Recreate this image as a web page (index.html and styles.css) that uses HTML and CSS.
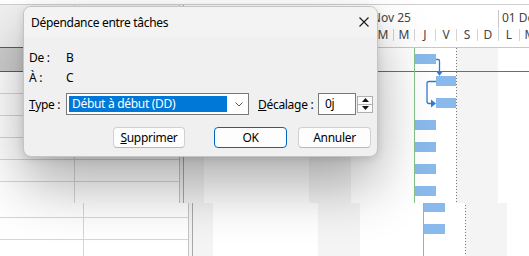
FILE: index.html
```html
<!DOCTYPE html>
<html lang="fr">
<head>
<meta charset="utf-8">
<title>Dépendance entre tâches</title>
<link rel="stylesheet" href="styles.css">
</head>
<body>
<div class="screen">
  <div class="strip strip-top">
    <div class="project">
      <div class="ribbon-edge"></div>
      <div class="view">
        <div class="grid">
          <div class="grid-head"><div class="c1"></div><div class="c2"></div></div>
          <div class="grid-row sel"><div class="c1"></div><div class="c2"></div></div>
          <div class="grid-row"><div class="c1"></div><div class="c2"></div></div>
          <div class="grid-row"><div class="c1"></div><div class="c2"></div></div>
          <div class="grid-row"><div class="c1"></div><div class="c2"></div></div>
          <div class="grid-row"><div class="c1"></div><div class="c2"></div></div>
          <div class="grid-row"><div class="c1"></div><div class="c2"></div></div>
          <div class="grid-row"><div class="c1"></div><div class="c2"></div></div>
          <div class="grid-row"><div class="c1"></div><div class="c2"></div></div>
          <div class="grid-row"><div class="c1"></div><div class="c2"></div></div>
          <div class="grid-row"><div class="c1"></div><div class="c2"></div></div>
        </div>
        <div class="splitter"></div>
        <div class="gantt">
          <div class="timescale">
            <div class="tier-top">
              <div class="week partial"></div>
              <div class="week">17 Nov 25</div>
              <div class="week">24 Nov 25</div>
              <div class="week">01 Déc 25</div>
            </div>
            <div class="tier-bottom">
              <div class="day">D</div><div class="day">L</div><div class="day">M</div><div class="day">M</div><div class="day">J</div><div class="day">V</div><div class="day">S</div>
              <div class="day">D</div><div class="day">L</div><div class="day">M</div><div class="day">M</div><div class="day">J</div><div class="day">V</div><div class="day">S</div>
              <div class="day">D</div><div class="day">L</div><div class="day">M</div>
            </div>
          </div>
          <div class="chart">
            <div class="today"></div>
            <div class="status"></div>
            <div class="g-row sel"><div class="bar" style="margin-left:231px;width:21px"></div></div>
            <div class="g-row"><div class="bar" style="margin-left:252px;width:20px"></div></div>
            <div class="g-row"><div class="bar" style="margin-left:252px;width:20px"></div></div>
            <div class="g-row"><div class="bar" style="margin-left:231px;width:21px"></div></div>
            <div class="g-row"><div class="bar" style="margin-left:231px;width:21px"></div></div>
            <div class="g-row"><div class="bar" style="margin-left:231px;width:21px"></div></div>
            <div class="g-row"><div class="bar" style="margin-left:231px;width:21px"></div></div>
            <div class="g-row"><div class="bar" style="margin-left:231px;width:21px"></div></div>
            <div class="g-row"><div class="bar" style="margin-left:231px;width:21px"></div></div>
            <div class="g-row"></div>
            <svg class="links" width="300" height="80" viewBox="0 0 300 80">
              <path d="M252 11.5 H254 Q255.5 11.5 255.5 13 V24" fill="none" stroke="#2f7bd1" stroke-width="1.3"/>
              <polygon points="252,23 259,23 255.5,28" fill="#2f7bd1"/>
              <path d="M252 33.5 H245 Q243 33.5 243 35.5 V53.5 Q243 55.5 245 55.5 H248" fill="none" stroke="#2f7bd1" stroke-width="1.3"/>
              <polygon points="247,51.5 247,59.5 252,55.5" fill="#2f7bd1"/>
            </svg>
          </div>
        </div>
      </div>
    </div>
  </div>
  <div class="strip strip-bottom">
    <div class="project wide">
      <div class="ribbon-edge"></div>
      <div class="view">
        <div class="grid">
          <div class="grid-head"><div class="c1"></div><div class="c2"></div></div>
          <div class="grid-row sel"><div class="c1"></div><div class="c2"></div></div>
          <div class="grid-row"><div class="c1"></div><div class="c2"></div></div>
          <div class="grid-row"><div class="c1"></div><div class="c2"></div></div>
          <div class="grid-row"><div class="c1"></div><div class="c2"></div></div>
          <div class="grid-row"><div class="c1"></div><div class="c2"></div></div>
          <div class="grid-row"><div class="c1"></div><div class="c2"></div></div>
          <div class="grid-row"><div class="c1"></div><div class="c2"></div></div>
          <div class="grid-row"><div class="c1"></div><div class="c2"></div></div>
          <div class="grid-row"><div class="c1"></div><div class="c2"></div></div>
          <div class="grid-row"><div class="c1"></div><div class="c2"></div></div>
        </div>
        <div class="splitter"></div>
        <div class="gantt">
          <div class="timescale"></div>
          <div class="chart">
            <div class="today"></div>
            <div class="status"></div>
            <div class="g-row sel"></div>
            <div class="g-row"></div>
            <div class="g-row"></div>
            <div class="g-row"></div>
            <div class="g-row"></div>
            <div class="g-row"></div>
            <div class="g-row"></div>
            <div class="g-row"><div class="bar" style="margin-left:231px;width:21px"></div></div>
            <div class="g-row"><div class="bar" style="margin-left:231px;width:21px"></div></div>
            <div class="g-row"></div>
          </div>
        </div>
      </div>
    </div>
  </div>

  <div class="dialog" role="dialog" aria-label="Dépendance entre tâches">
    <div class="dlg-title">
      <span class="dlg-title-text">Dépendance entre tâches</span>
      <svg class="close" width="10" height="10" viewBox="0 0 10 10">
        <path d="M0.5 0.5 L9.5 9.5 M9.5 0.5 L0.5 9.5" stroke="#1a1a1a" stroke-width="1.1" fill="none"/>
      </svg>
    </div>
    <div class="dlg-body">
      <div class="info-row"><span class="lbl">De :</span><span class="val">B</span></div>
      <div class="info-row"><span class="lbl">À :</span><span class="val">C</span></div>
      <div class="type-row">
        <span class="lbl"><u>T</u>ype :</span>
        <div class="select">
          <span class="sel-text">Début à début (DD)</span>
          <svg class="chev" width="8" height="5" viewBox="0 0 8 5">
            <polyline points="0.5,0.5 4,4 7.5,0.5" fill="none" stroke="#5a5a5a" stroke-width="1"/>
          </svg>
        </div>
        <span class="lbl2"><u>D</u>écalage :</span>
        <div class="num">0j</div>
        <div class="spinner">
          <div class="spin-btn"><svg width="7" height="4" viewBox="0 0 7 4"><polygon points="0,4 3.5,0 7,4" fill="#111"/></svg></div>
          <div class="spin-btn"><svg width="7" height="4" viewBox="0 0 7 4"><polygon points="0,0 7,0 3.5,4" fill="#111"/></svg></div>
        </div>
      </div>
      <div class="btn-row">
        <button class="btn btn-del"><u>S</u>upprimer</button>
        <button class="btn btn-ok">OK</button>
        <button class="btn btn-cancel">Annuler</button>
      </div>
    </div>
  </div>
</div>
</body>
</html>
```

FILE: styles.css
```css
* { box-sizing: border-box; }
html, body { margin: 0; padding: 0; }
body {
  width: 529px;
  height: 256px;
  overflow: hidden;
  background: #fff;
  font-family: "Noto Sans", "Open Sans", sans-serif;
  font-size: 12px;
  color: #000;
}
.screen { position: relative; width: 529px; height: 256px; overflow: hidden; }

.strip { overflow: hidden; width: 529px; }
.strip-top { height: 203px; }
.strip-bottom { height: 53px; }
.strip-bottom .project { margin-top: -211px; }

.project { width: 529px; background: #fff; }
.ribbon-edge { height: 5px; background: #fff; border-bottom: 1px solid #cfcfcf; }
.view { display: flex; }

.grid { width: 180px; flex: none; border-right: 1px solid #c4c4c4; background: #fff; }
.wide .grid { width: 189px; }
.grid-head { display: flex; height: 43px; background: #f0f0f0; border-bottom: 1px solid #2e7d32; }
.grid-row { display: flex; height: 22px; border-bottom: 1px solid #d6d6d6; }
.grid-row.sel { height: 24px; background: #cecece; border-bottom-color: #2e7d32; }
.c1 { width: 75px; flex: none; border-right: 1px solid #d6d6d6; }
.wide .c1 { width: 84px; }
.c2 { flex: 1; }

.splitter { width: 4px; flex: none; background: #f3f3f3; border-right: 1px solid #a8a8a8; }

.gantt { flex: 1; min-width: 0; overflow: hidden; }
.timescale { height: 43px; background: #fff; border-bottom: 1px solid #c8c8c8; color: #444; }
.tier-top { height: 23px; display: flex; }
.week {
  width: 147px;
  flex: none;
  margin-top: 5px;
  border-left: 1px solid #c8c8c8;
  padding-left: 3px;
  line-height: 15px;
  white-space: nowrap;
  overflow: hidden;
}
.week.partial { width: 20px; border-left: 0; }
.tier-bottom { height: 19px; display: flex; margin-left: -1px; padding-top: 1px; }
.day {
  width: 21px;
  flex: none;
  height: 12px;
  line-height: 12px;
  border-left: 1px solid #d4d4d4;
  text-align: center;
}

.chart {
  position: relative;
  background-image: linear-gradient(90deg, #f4f4f4 42px, transparent 42px);
  background-size: 147px 100%;
  background-position: 125px 0;
  background-repeat: repeat-x;
}
.g-row { height: 22px; padding-top: 4px; }
.wide .g-row { padding-top: 6px; }
.g-row.sel { height: 24px; padding-top: 6px; border-bottom: 1px solid #6d6d6d; }
.bar { height: 10px; background: #8ab9eb; position: relative; }
.today { position: absolute; top: 0; bottom: 0; left: 230px; width: 1px; background: #86c486; }
.status {
  position: absolute; top: 0; bottom: 0; left: 272px; width: 1px;
  background: repeating-linear-gradient(180deg, #7a7a7a 0 1px, transparent 1px 3px);
}
.links { position: absolute; left: 0; top: 0; }

/* dialog */
.dialog {
  position: absolute;
  left: 23px;
  top: 6px;
  width: 355px;
  height: 151px;
  background: #f0f0f0;
  border: 1px solid #c4c4c4;
  border-radius: 8px;
  overflow: hidden;
  letter-spacing: -0.3px;
  box-shadow: 0 28px 56px rgba(0,0,0,0.32), 0 2px 8px rgba(0,0,0,0.12);
}
.dlg-title {
  height: 30px;
  background: #f3f3f3;
  display: flex;
  align-items: center;
  justify-content: space-between;
  padding-left: 7px;
  padding-right: 8px;
}
.close { display: block; }
.dlg-body { padding: 11px 0 0 5px; }
.info-row { display: flex; height: 20px; line-height: 20px; }
.lbl { width: 37px; flex: none; white-space: nowrap; }
.type-row { display: flex; align-items: center; height: 22px; margin-top: 5px; }
.select {
  width: 183px;
  height: 22px;
  flex: none;
  border: 1px solid #7a7a7a;
  background: #fff;
  display: flex;
  align-items: center;
  padding: 2px;
}
.sel-text {
  width: 158px;
  height: 16px;
  flex: none;
  background: #0078d7;
  color: #fff;
  line-height: 16px;
  padding-left: 3px;
  white-space: nowrap;
}
.chev { margin-left: 8px; display: block; }
.lbl2 { margin-left: 9px; width: 60px; flex: none; white-space: nowrap; }
.num {
  width: 38px;
  height: 22px;
  flex: none;
  border: 1px solid #7a7a7a;
  background: #fff;
  padding-left: 6px;
  line-height: 20px;
}
.spinner { margin-left: 1px; width: 16px; height: 17px; flex: none; display: flex; flex-direction: column; }
.spin-btn {
  flex: 1;
  border: 1px solid #b0b0b0;
  background: #fbfbfb;
  display: flex;
  align-items: center;
  justify-content: center;
}
.spin-btn + .spin-btn { border-top: 0; }
.spin-btn svg { display: block; }
.btn-row { display: flex; margin-top: 12px; padding-left: 84px; }
.btn {
  height: 21px;
  width: 73px;
  flex: none;
  border: 1px solid #d0d0d0;
  border-bottom-color: #b8b8b8;
  border-radius: 4px;
  background: #fdfdfd;
  font: inherit;
  letter-spacing: inherit;
  color: #000;
  padding: 0;
  line-height: 19px;
}
.btn-del { width: 72px; }
.btn-ok { margin-left: 29px; border-color: #0067c0; }
.btn-cancel { margin-left: 11px; }
```
